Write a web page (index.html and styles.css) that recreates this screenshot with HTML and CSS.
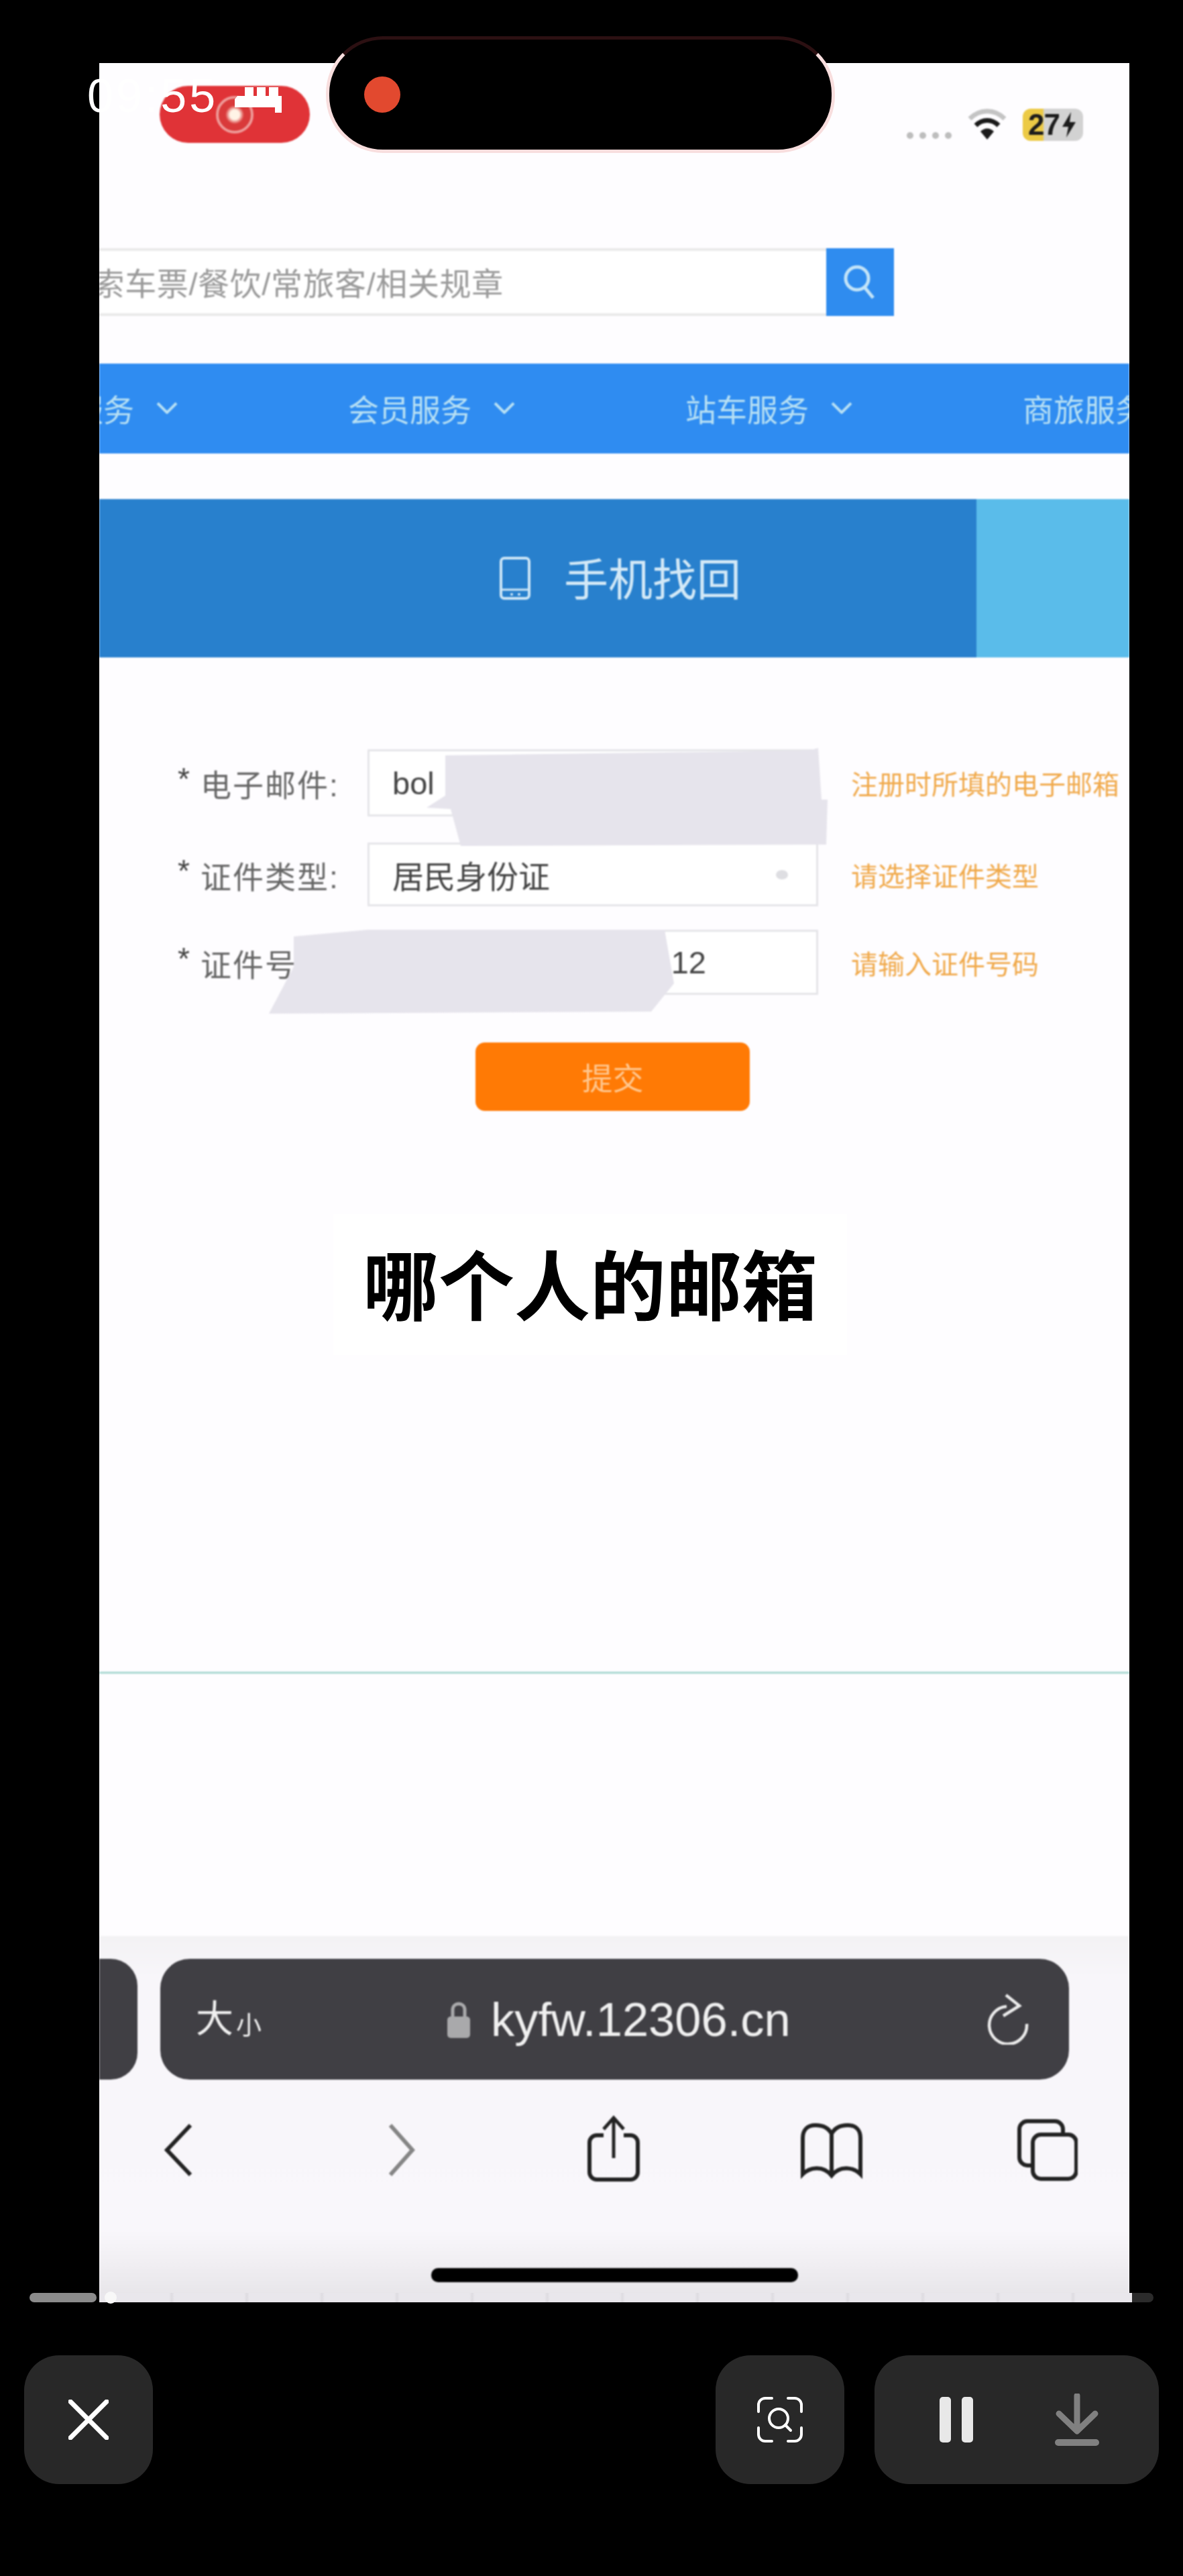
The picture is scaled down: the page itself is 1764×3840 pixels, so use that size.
FILE: index.html
```html
<!DOCTYPE html>
<html lang="zh-CN">
<head>
  <meta charset="UTF-8">
  <title>手机找回</title>
  <link rel="stylesheet" href="styles.css">
</head>
<body>
  <div class="screen">
    <div class="page">
      <div class="statusbar">
        <div class="rec-pill">
          <span class="rec-ring"></span>
        </div>
        <div class="status-right">
          <span class="signal"><i></i><i></i><i></i><i></i></span>
          <svg class="wifi" viewBox="0 0 58 46" width="58" height="46">
            <path d="M3 15 C18 0 40 0 55 15" fill="none" stroke="#c4c4c4" stroke-width="7"/>
            <path d="M12 25 C22 15 36 15 46 25" fill="none" stroke="#1a1a1a" stroke-width="7"/>
            <path d="M19 34 L29 46 L39 34 C33 28 25 28 19 34 Z" fill="#1a1a1a"/>
          </svg>
          <div class="battery">
            <span>27</span>
            <svg viewBox="0 0 22 38" width="22" height="38"><path d="M14 0 L1 22 H10 L7 38 L21 15 H12 Z" fill="#1c1c1c"/></svg>
          </div>
        </div>
      </div>

      <div class="search">
        <div class="search-input"><span>搜索车票/餐饮/常旅客/相关规章</span></div>
        <div class="search-btn">
          <svg viewBox="0 0 60 60" width="60" height="60">
            <circle cx="25" cy="24" r="17" fill="none" stroke="#c3e4f8" stroke-width="5"/>
            <path d="M36 37 L49 53" stroke="#c3e4f8" stroke-width="5" fill="none"/>
          </svg>
        </div>
      </div>

      <div class="nav">
        <div class="nav-item">团购服务<svg viewBox="0 0 34 18" width="34" height="18"><path d="M3 2 L17 16 L31 2" fill="none" stroke="#b7e0f4" stroke-width="4"/></svg></div>
        <div class="nav-item">会员服务<svg viewBox="0 0 34 18" width="34" height="18"><path d="M3 2 L17 16 L31 2" fill="none" stroke="#b7e0f4" stroke-width="4"/></svg></div>
        <div class="nav-item">站车服务<svg viewBox="0 0 34 18" width="34" height="18"><path d="M3 2 L17 16 L31 2" fill="none" stroke="#b7e0f4" stroke-width="4"/></svg></div>
        <div class="nav-item">商旅服务<svg viewBox="0 0 34 18" width="34" height="18"><path d="M3 2 L17 16 L31 2" fill="none" stroke="#b7e0f4" stroke-width="4"/></svg></div>
      </div>

      <div class="tabs">
        <div class="tab-phone">
          <svg viewBox="0 0 46 64" width="46" height="64">
            <rect x="2" y="2" width="42" height="60" rx="5" fill="none" stroke="#cfe7f7" stroke-width="4"/>
            <path d="M2 49 H44" stroke="#cfe7f7" stroke-width="3"/>
            <circle cx="18" cy="56" r="2" fill="#cfe7f7"/>
            <circle cx="29" cy="56" r="2" fill="#cfe7f7"/>
          </svg>
          <span class="tab-title">手机找回</span>
        </div>
        <div class="tab-other"></div>
      </div>

      <div class="form">
        <div class="row row-mail">
          <label><b>*</b>电子邮件:</label>
          <div class="field">bol</div>
          <span class="hint">注册时所填的电子邮箱</span>
        </div>
        <div class="row row-type">
          <label><b>*</b>证件类型:</label>
          <div class="field field-select">居民身份证<i></i></div>
          <span class="hint">请选择证件类型</span>
        </div>
        <div class="row row-id">
          <label><b>*</b>证件号码:</label>
          <div class="field field-id">12</div>
          <span class="hint">请输入证件号码</span>
        </div>
      </div>

      <div class="submit">提交</div>
      <div class="rule"></div>

      <div class="browser">
        <div class="url-row">
          <div class="url-prev"></div>
          <div class="url-bar">
            <span class="text-size">大<small>小</small></span>
            <span class="site">
              <svg viewBox="0 0 34 56" width="34" height="56">
                <path d="M8 26 V14 C8 2 26 2 26 14 V26" fill="none" stroke="#a9a9ab" stroke-width="5"/>
                <rect x="0" y="24" width="34" height="32" rx="5" fill="#a9a9ab"/>
              </svg>
              kyfw.12306.cn
            </span>
            <svg class="reload" viewBox="0 0 64 76" width="64" height="76">
              <path d="M30 19 A28 28 0 1 0 60 45" fill="none" stroke="#ececec" stroke-width="4.5"/>
              <path d="M29 2 L49 18 L25 33" fill="none" stroke="#ececec" stroke-width="4.5"/>
            </svg>
          </div>
        </div>

        <div class="toolbar">
          <svg class="tool-back" viewBox="0 0 42 100" width="42" height="100"><path d="M39 15 L4 52 L39 89" fill="none" stroke="#222" stroke-width="6"/></svg>
          <svg class="tool-fwd" viewBox="0 0 40 100" width="40" height="100"><path d="M3 15 L36 52 L3 89" fill="none" stroke="#858585" stroke-width="6"/></svg>
          <svg class="tool-share" viewBox="0 0 84 100" width="84" height="100">
            <path d="M27 30 H17 A11 11 0 0 0 6 41 V85 A11 11 0 0 0 17 96 H67 A11 11 0 0 0 78 85 V41 A11 11 0 0 0 67 30 H57" fill="none" stroke="#222" stroke-width="6"/>
            <path d="M42 4 V64 M27 21 L42 4 L57 21" fill="none" stroke="#222" stroke-width="5"/>
          </svg>
          <svg class="tool-book" viewBox="0 0 94 100" width="94" height="100">
            <path d="M47 28 C42 18 32 15 23 15 C11 15 4 22 4 34 V88 C14 78 34 74 47 90 C60 74 80 78 90 88 V34 C90 22 83 15 71 15 C62 15 52 18 47 28 V90" fill="none" stroke="#222" stroke-width="6"/>
          </svg>
          <svg class="tool-tabs" viewBox="0 0 90 100" width="90" height="100">
            <rect x="3" y="9" width="65" height="66" rx="12" fill="none" stroke="#222" stroke-width="6"/>
            <rect x="23" y="29" width="65" height="66" rx="12" fill="#f8f6fa" stroke="#222" stroke-width="6"/>
          </svg>
        </div>

        <div class="home-bar"></div>
      </div>

      <svg class="smears" viewBox="148 94 1536 3338" width="1536" height="3338">
        <polygon points="664,1126 1205,1119 1220,1115 1225,1192 1234,1192 1232,1259 687,1261 672,1206 636,1204 664,1186" fill="#e6e4ec"/>
        <polygon points="438,1396 548,1386 991,1386 1005,1466 971,1508 401,1511 438,1441" fill="#e6e4ec"/>
      </svg>
    </div>

    <div class="caption"><span>哪个人的邮箱</span></div>
  </div>

  <div class="controls">
    <div class="ctrl ctrl-close">
      <svg viewBox="0 0 60 60" width="60" height="60"><path d="M3 3 L57 57 M57 3 L3 57" stroke="#fff" stroke-width="7" stroke-linecap="round"/></svg>
    </div>
    <div class="ctrl ctrl-scan">
      <svg viewBox="0 0 68 68" width="68" height="68">
        <path d="M2 22 V12 A10 10 0 0 1 12 2 H22 M46 2 H56 A10 10 0 0 1 66 12 V22 M66 46 V56 A10 10 0 0 1 56 66 H46 M22 66 H12 A10 10 0 0 1 2 56 V46" fill="none" stroke="#fff" stroke-width="4" stroke-linecap="round"/>
        <circle cx="32" cy="32" r="14" fill="none" stroke="#fff" stroke-width="4"/>
        <path d="M42 42 L50 50" stroke="#fff" stroke-width="4" stroke-linecap="round"/>
      </svg>
    </div>
    <div class="ctrl ctrl-media">
      <div class="pause"><i></i><i></i></div>
      <svg viewBox="0 0 66 78" width="66" height="78">
        <path d="M33 3 V55 M6 30 L33 56 L60 30" fill="none" stroke="#808080" stroke-width="9" stroke-linecap="round" stroke-linejoin="round"/>
        <rect x="0" y="68" width="66" height="10" rx="5" fill="#808080"/>
      </svg>
    </div>
  </div>

  <div class="time">09:55</div>
  <svg class="time-glitch" viewBox="0 0 70 38" width="70" height="38">
    <path d="M15 0 H28 V13 H15 Z M33 0 H46 V13 H33 Z M51 0 H65 V13 H51 Z M4 13 H70 V38 H60 V30 H0 V18 Z" fill="#fff"/>
  </svg>
  <div class="island"><span></span></div>

  <div class="scrubber">
    <div class="scrub-played"></div>
    <div class="scrub-track"><i></i></div>
    <div class="scrub-rest"></div>
  </div>
</body>
</html>
```

FILE: styles.css
```css
* {
  box-sizing: border-box;
}

body {
  position: relative;
  width: 1764px;
  height: 3840px;
  margin: 0;
  overflow: hidden;
  background: #000;
  font-family: "Liberation Sans", "Noto Sans CJK SC", sans-serif;
}

.screen {
  position: relative;
  width: 1536px;
  height: 3338px;
  margin: 94px 0 0 148px;
  overflow: hidden;
  background: #fefdff;
}

.page {
  position: relative;
  display: flex;
  flex-direction: column;
  height: 3338px;
  filter: blur(1.1px);
}

/* status bar */
.statusbar {
  display: flex;
  align-items: flex-start;
  height: 276px;
  padding: 34px 69px 0 90px;
}

.rec-pill {
  display: flex;
  align-items: center;
  justify-content: center;
  width: 224px;
  height: 85px;
  border-radius: 43px;
  background: #e03337;
}

.rec-ring {
  width: 56px;
  height: 56px;
  border: 4px solid #ee9a98;
  border-radius: 50%;
  background: radial-gradient(circle, #fff3e6 0, #fff3e6 7px, #d93a3a 14px);
}

.status-right {
  display: flex;
  align-items: flex-start;
  margin-left: auto;
  padding-top: 34px;
}

.signal {
  display: flex;
  gap: 9px;
  margin: 35px 24px 0 0;
}

.signal i {
  width: 10px;
  height: 10px;
  border-radius: 50%;
  background: #bdbdbd;
}

.wifi {
  margin-right: 24px;
}

.battery {
  display: flex;
  align-items: center;
  gap: 3px;
  width: 90px;
  height: 48px;
  padding-left: 8px;
  border-radius: 12px;
  background: linear-gradient(90deg, #ecca45 0, #ecca45 30px, #d2d2d2 32px);
  color: #1c1c1c;
  font-size: 44px;
  font-weight: 700;
  letter-spacing: -1px;
}

/* search */
.search {
  display: flex;
  width: 1185px;
  height: 101px;
}

.search-input {
  display: flex;
  align-items: center;
  width: 1084px;
  padding-bottom: 3px;
  overflow: hidden;
  border-top: 4px solid #eaeaea;
  border-bottom: 4px solid #eaeaea;
  background: #fff;
  color: #9a9a9a;
  font-size: 47px;
  letter-spacing: 0.6px;
}

.search-input span {
  margin-left: -57px;
  white-space: nowrap;
}

.search-btn {
  display: flex;
  align-items: center;
  justify-content: center;
  width: 101px;
  background: #2f8cef;
}

/* nav */
.nav {
  display: flex;
  align-items: center;
  height: 134px;
  margin-top: 71px;
  padding-bottom: 3px;
  overflow: hidden;
  background: #2f8cf1;
}

.nav-item {
  display: flex;
  flex: 0 0 503px;
  align-items: center;
  gap: 32px;
  color: #b7e0f4;
  font-size: 46px;
  white-space: nowrap;
}

.nav-item:first-child {
  margin-left: -132px;
}

/* tabs */
.tabs {
  display: flex;
  height: 236px;
  margin-top: 68px;
}

.tab-phone {
  display: flex;
  align-items: center;
  gap: 50px;
  width: 1308px;
  padding-left: 597px;
  background: #2880cd;
  color: #d3e9f7;
  font-size: 66px;
}

.tab-title {
  padding-bottom: 6px;
}

.tab-other {
  flex: 1;
  background: #5abcea;
}

/* form */
.form {
  display: flex;
  flex-direction: column;
  gap: 35px;
  margin: 137px 0 0 117px;
}

.row {
  display: grid;
  grid-template-columns: 283px 672px 1fr;
  align-items: center;
  height: 97px;
}

.row-mail {
  height: 100px;
}

.row-type {
  height: 95px;
  margin-top: 4px;
}

.row label {
  display: flex;
  color: #666;
  font-size: 46px;
  letter-spacing: 2px;
}

.row label b {
  width: 34px;
  color: #444;
  font-weight: 400;
}

.field {
  display: flex;
  align-items: center;
  height: 100%;
  padding-left: 34px;
  border: 3px solid #e5e5e9;
  background: #fff;
  color: #444;
  font-size: 47px;
}

.field-select {
  justify-content: space-between;
  padding-right: 42px;
}

.field-select i {
  width: 18px;
  height: 14px;
  border-radius: 50%;
  background: #dedee2;
}

.field-id {
  justify-content: flex-end;
  padding-right: 164px;
}

.hint {
  margin-left: 49px;
  color: #f0a94b;
  font-size: 40px;
  white-space: nowrap;
}

.submit {
  display: flex;
  align-items: center;
  justify-content: center;
  width: 409px;
  height: 102px;
  margin: 71px 0 0 561px;
  padding-bottom: 3px;
  border-radius: 14px;
  background: #ff7a05;
  color: #ffc78f;
  font-size: 46px;
}

.rule {
  height: 3px;
  margin-top: 836px;
  background: #a9d8d2;
}

/* safari chrome */
.browser {
  display: flex;
  flex-direction: column;
  height: 546px;
  margin-top: auto;
  padding-top: 34px;
  background: linear-gradient(#f3f2f4 0, #f8f6fa 60px, #f9f7fb 440px, #e6e4e8 100%);
}

.url-row {
  display: flex;
  gap: 34px;
  height: 180px;
}

.url-prev {
  width: 57px;
  border-radius: 0 40px 40px 0;
  background: #403f44;
}

.url-bar {
  display: flex;
  align-items: center;
  width: 1355px;
  padding: 0 59px 0 53px;
  border-radius: 44px;
  background: #403f44;
  color: #f0f0f0;
}

.text-size {
  display: flex;
  align-items: flex-end;
  gap: 4px;
  width: 100px;
  font-size: 56px;
  line-height: 1;
}

.text-size small {
  font-size: 38px;
}

.site {
  display: flex;
  align-items: center;
  gap: 31px;
  margin-left: 275px;
  font-size: 70.5px;
}

.reload {
  margin-left: auto;
}

.toolbar {
  display: flex;
  height: 100px;
  margin-top: 53px;
  padding-left: 97px;
}

.tool-fwd {
  margin-left: 292px;
}

.tool-share {
  margin-left: 254px;
}

.tool-book {
  margin-left: 236px;
}

.tool-tabs {
  margin-left: 230px;
}

.home-bar {
  width: 547px;
  height: 21px;
  margin: 128px auto 0;
  border-radius: 10px;
  background: #000;
}

/* over the content */
.smears {
  position: absolute;
  top: 0;
  left: 0;
}

.caption {
  position: absolute;
  top: 1716px;
  left: 349px;
  display: flex;
  align-items: center;
  justify-content: center;
  width: 766px;
  height: 210px;
  padding-bottom: 10px;
  background: #fff;
  color: #000;
  font-family: "Noto Sans CJK SC", sans-serif;
  font-size: 113px;
  font-weight: 700;
}

.time {
  position: absolute;
  top: 108px;
  left: 130px;
  color: #fff;
  font-family: "Liberation Sans", sans-serif;
  font-size: 70px;
  letter-spacing: 4px;
  line-height: 70px;
}

.time-glitch {
  position: absolute;
  top: 130px;
  left: 350px;
}

.island {
  position: absolute;
  top: 54px;
  left: 486px;
  display: flex;
  align-items: center;
  width: 759px;
  height: 174px;
  padding-left: 52px;
  border: 5px solid #f8dede;
  border-top-color: #2c1012;
  border-radius: 85px;
  background: #000;
}

.island span {
  width: 54px;
  height: 54px;
  border-radius: 50%;
  background: #e2492f;
}

.scrubber {
  position: absolute;
  top: 3418px;
  left: 44px;
  display: flex;
  width: 1676px;
  height: 14px;
}

.scrub-played {
  width: 100px;
  border-radius: 7px;
  background: #8b8b8b;
}

.scrub-track {
  position: relative;
  width: 1540px;
  margin-left: 4px;
  background: repeating-linear-gradient(90deg, #e9e7ec 0, #e9e7ec 104px, #dedce1 108px, #e9e7ec 112px);
}

.scrub-track i {
  position: absolute;
  top: -2px;
  left: 8px;
  width: 18px;
  height: 18px;
  border-radius: 50%;
  background: #f8f8f8;
}

.scrub-rest {
  flex: 1;
  border-radius: 0 7px 7px 0;
  background: #2b2b2b;
}

/* bottom controls */
.controls {
  display: flex;
  gap: 45px;
  margin-top: 79px;
  padding: 0 36px;
}

.ctrl {
  display: flex;
  align-items: center;
  justify-content: center;
  width: 192px;
  height: 192px;
  border-radius: 52px;
  background: #282828;
}

.ctrl-scan {
  margin-left: auto;
}

.ctrl-media {
  justify-content: flex-start;
  width: 424px;
  padding-left: 97px;
}

.pause {
  display: flex;
  gap: 16px;
  margin-right: 122px;
}

.pause i {
  width: 17px;
  height: 68px;
  border-radius: 5px;
  background: #e8e8e8;
}
```
